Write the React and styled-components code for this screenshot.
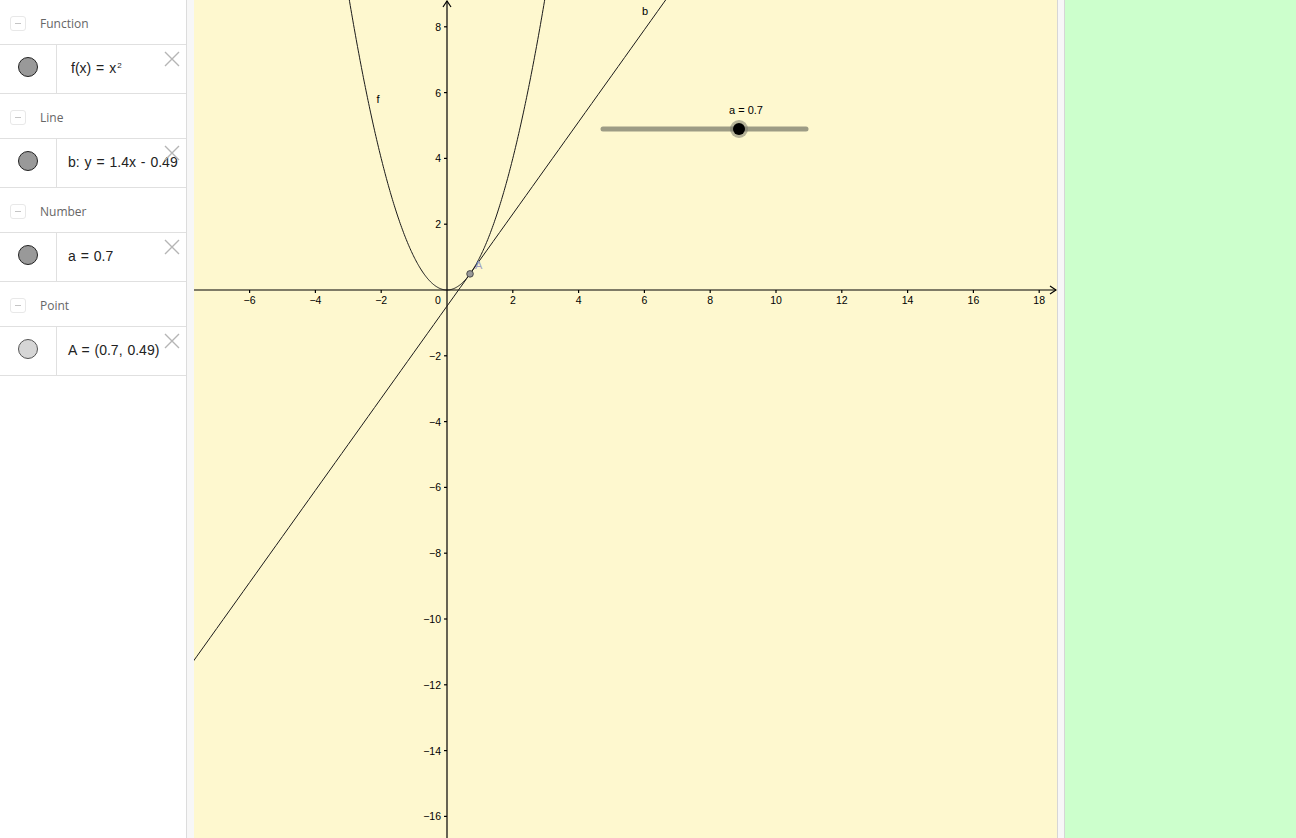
import React from 'react';
import styled, {createGlobalStyle} from 'styled-components';

const GlobalStyle = createGlobalStyle`
  html, body {
    margin: 0;
    padding: 0;
    height: 100%;
    overflow: hidden;
    background: #fff;
  }
  #root {
    height: 100%;
  }
`;

const GRAPH_W = 863;
const GRAPH_H = 838;
const OX = 253;
const OY = 290;
const SCALE = 32.9;

const items = [
  {type: 'Function', value: <>f(x) = x<sup>2</sup></>, pad: 15, fill: '#999999'},
  {type: 'Line', value: 'b: y = 1.4x - 0.49', pad: 12, fill: '#999999'},
  {type: 'Number', value: 'a = 0.7', pad: 12, fill: '#999999'},
  {type: 'Point', value: 'A = (0.7, 0.49)', pad: 12, fill: '#d6d6d6', light: true},
];

const px = (x) => OX + x * SCALE;
const py = (y) => OY - y * SCALE;

const buildPath = (fn, from, to, step) => {
  let d = '';
  for (let x = from; x <= to + 1e-9; x += step) {
    d += (d ? ' L' : 'M') + px(x).toFixed(2) + ' ' + py(fn(x)).toFixed(2);
  }
  return d;
};

const Graph = () => {
  const xTicks = [];
  for (let i = -6; i <= 18; i += 2) if (i !== 0) xTicks.push(i);
  const yTicks = [];
  for (let i = -16; i <= 8; i += 2) if (i !== 0) yTicks.push(i);
  const label = (n) => (n < 0 ? '\u2212' + Math.abs(n) : String(n));
  const sliderX1 = 603 - 194;
  const sliderX2 = 806 - 194;
  const knobX = 739 - 194;
  const sliderY = 129;

  return (
    <svg width={GRAPH_W} height={GRAPH_H} viewBox={`0 0 ${GRAPH_W} ${GRAPH_H}`}>
      {/* axes */}
      <g stroke="#000" strokeWidth="1.2" fill="none">
        <line x1="0" y1={OY} x2={GRAPH_W - 1} y2={OY} />
        <line x1={OX} y1="1" x2={OX} y2={GRAPH_H} />
        <polyline points={`${GRAPH_W - 7},${OY - 4} ${GRAPH_W - 1},${OY} ${GRAPH_W - 7},${OY + 4}`} />
        <polyline points={`${OX - 4},7 ${OX},1 ${OX + 4},7`} />
        {xTicks.map((t) => (
          <line key={'xt' + t} x1={px(t)} y1={OY} x2={px(t)} y2={OY + 3} />
        ))}
        {yTicks.map((t) => (
          <line key={'yt' + t} x1={OX - 3} y1={py(t)} x2={OX} y2={py(t)} />
        ))}
      </g>
      <g fontFamily="'Liberation Sans', Arial, sans-serif" fontSize="10.5" fill="#000">
        {xTicks.map((t) => (
          <text key={'xl' + t} x={px(t)} y={OY + 14} textAnchor="middle">{label(t)}</text>
        ))}
        {yTicks.map((t) => (
          <text key={'yl' + t} x={OX - 6} y={py(t) + 4} textAnchor="end">{label(t)}</text>
        ))}
        <text x={OX - 9} y={OY + 14} textAnchor="middle">0</text>
      </g>

      {/* curves */}
      <g stroke="#1a1a1a" strokeWidth="1" fill="none">
        <path d={buildPath((x) => x * x, -3.1, 3.1, 0.02)} />
        <path d={buildPath((x) => 1.4 * x - 0.49, -7.8, 18.6, 0.2)} />
      </g>
      <g fontFamily="'Liberation Sans', Arial, sans-serif" fontSize="11" fill="#000">
        <text x={378 - 194} y="103" textAnchor="middle">f</text>
        <text x={645 - 194} y="15" textAnchor="middle">b</text>
      </g>

      {/* point A */}
      <text x={px(0.7) + 5} y={py(0.49) - 5} fontFamily="'Liberation Sans', Arial, sans-serif" fontSize="11" fill="#a0a0c0">A</text>
      <circle cx={px(0.7)} cy={py(0.49)} r="3.3" fill="#999" stroke="#333" strokeWidth="0.8" />

      {/* slider a */}
      <text x={746 - 194} y="114" textAnchor="middle" fontFamily="'Liberation Sans', Arial, sans-serif" fontSize="11" fill="#000">a = 0.7</text>
      <line x1={sliderX1} y1={sliderY} x2={sliderX2} y2={sliderY} stroke="#9d9c85" strokeWidth="5" strokeLinecap="round" />
      <circle cx={knobX} cy={sliderY} r="9" fill="#7a7a6e" opacity="0.55" />
      <circle cx={knobX} cy={sliderY} r="6" fill="#000" />
    </svg>
  );
};

const App = () => (
  <>
    <GlobalStyle />
    <Page>
      <AlgebraPanel>
        {items.map((it) => (
          <Group key={it.type}>
            <Header>
              <CollapseIcon />
              <HeaderLabel>{it.type}</HeaderLabel>
            </Header>
            <ItemRow>
              <MarbleCell>
                <Marble $fill={it.fill} $light={it.light} />
              </MarbleCell>
              <ValueCell $pad={it.pad}>{it.value}</ValueCell>
              <DeleteButton>
                <svg width="18" height="18" viewBox="0 0 18 18">
                  <path d="M2 2 L16 16 M16 2 L2 16" stroke="#b5b5b5" strokeWidth="1.4" fill="none" />
                </svg>
              </DeleteButton>
            </ItemRow>
          </Group>
        ))}
      </AlgebraPanel>
      <Splitter />
      <GraphPanel>
        <Graph />
      </GraphPanel>
      <Splitter $double />
      <SidePanel />
    </Page>
  </>
);

const Page = styled.div`
  display: flex;
  width: 1296px;
  height: 838px;
  overflow: hidden;
`;

const AlgebraPanel = styled.div`
  width: 186px;
  flex-shrink: 0;
  background: #fff;
  border-right: 1px solid #dcdcdc;
  display: flex;
  flex-direction: column;
`;

const Group = styled.div`
  display: flex;
  flex-direction: column;
`;

const Header = styled.div`
  height: 42px;
  padding: 2px 0 0 10px;
  display: flex;
  align-items: center;
  border-bottom: 1px solid #e0e0e0;
`;

const CollapseIcon = styled.div`
  width: 16px;
  height: 15px;
  border: 1px solid #e8e8e8;
  border-radius: 3px;
  box-sizing: border-box;
  position: relative;
  margin-right: 14px;
  &::after {
    content: '';
    position: absolute;
    left: 4px;
    right: 4px;
    top: 6px;
    height: 1px;
    background: #c4c4c4;
  }
`;

const HeaderLabel = styled.span`
  font-family: 'Open Sans', 'Noto Sans', sans-serif;
  font-size: 12px;
  color: #666;
`;

const ItemRow = styled.div`
  position: relative;
  height: 48px;
  display: flex;
  border-bottom: 1px solid #e0e0e0;
`;

const MarbleCell = styled.div`
  width: 57px;
  flex-shrink: 0;
  box-sizing: border-box;
  padding-bottom: 4px;
  border-right: 1px solid #e0e0e0;
  display: flex;
  align-items: center;
  justify-content: center;
`;

const Marble = styled.div`
  width: 20px;
  height: 20px;
  box-sizing: border-box;
  border-radius: 50%;
  background: ${(p) => p.$fill};
  border: 1px solid ${(p) => (p.$light ? '#555' : '#222')};
`;

const ValueCell = styled.div`
  flex: 1;
  display: flex;
  align-items: center;
  box-sizing: border-box;
  padding: 0 0 3px ${(p) => p.$pad - 1}px;
  font-family: 'Liberation Sans', Arial, sans-serif;
  font-size: 14px;
  word-spacing: 1px;
  color: #222;
  white-space: nowrap;
  overflow: hidden;
  sup {
    font-size: 8px;
    margin-left: 1px;
    position: relative;
    top: -2px;
    vertical-align: super;
    line-height: 0;
  }
`;

const DeleteButton = styled.div`
  position: absolute;
  right: 5px;
  top: 5px;
  width: 18px;
  height: 18px;
`;

const Splitter = styled.div`
  width: ${(p) => (p.$double ? '6px' : '7px')};
  flex-shrink: 0;
  background: #f7f7f7;
  border-left: ${(p) => (p.$double ? '1px solid #d6d6d6' : 'none')};
  border-right: ${(p) => (p.$double ? '1px solid #d6d6d6' : 'none')};
`;

const GraphPanel = styled.div`
  width: ${GRAPH_W}px;
  flex-shrink: 0;
  height: 100%;
  background: #fef8cf;
  svg {
    display: block;
  }
`;

const SidePanel = styled.div`
  flex: 1;
  background: #ccffcc;
`;

export default App;
